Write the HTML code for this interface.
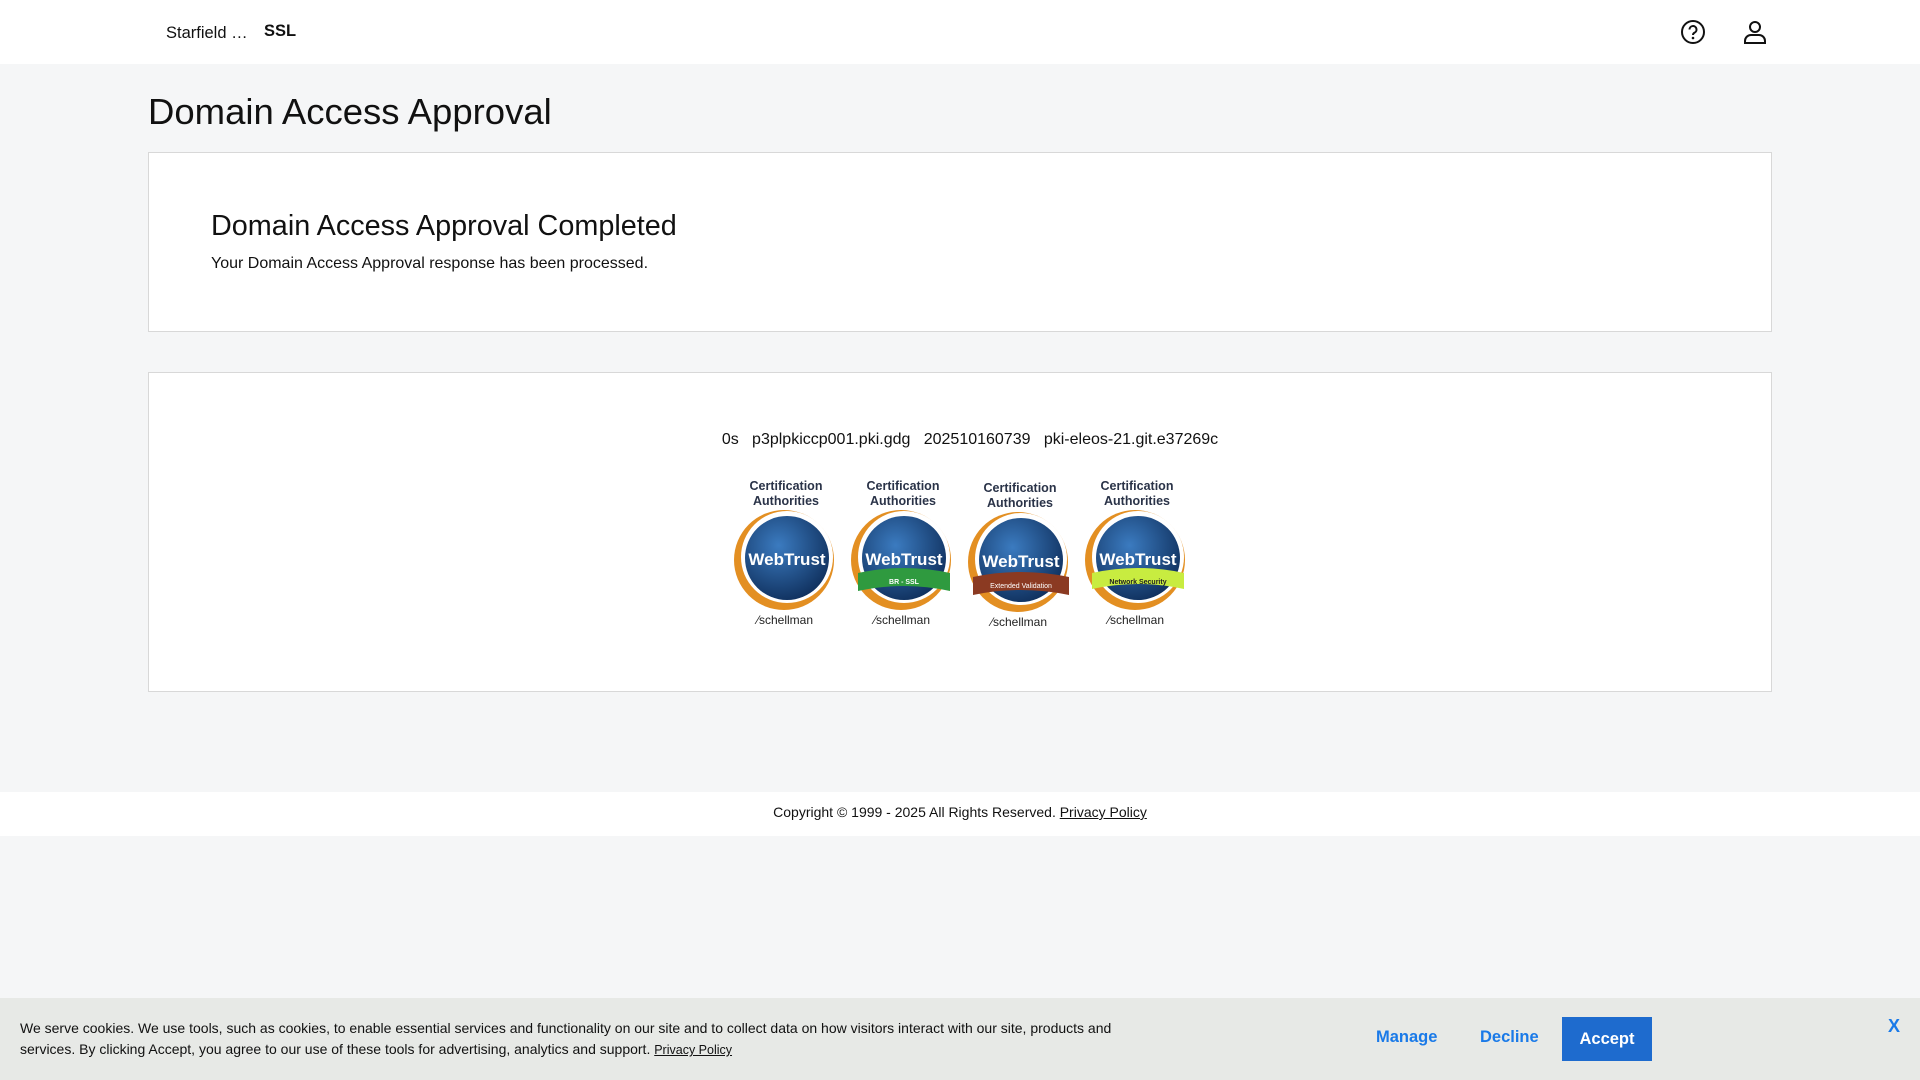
<!DOCTYPE html>
<html><head><meta charset="utf-8"><style>
*{margin:0;padding:0;box-sizing:border-box}
body{width:1920px;height:1080px;background:#f5f6f7;font-family:"Liberation Sans",Arial,sans-serif;color:#111;position:relative;overflow:hidden}
.hdr{position:absolute;left:0;top:0;width:1920px;height:64px;background:#fff}
.abs{position:absolute;white-space:nowrap}
.card{position:absolute;left:148px;width:1624px;background:#fff;border:1px solid #d8d8d8}
.foot{position:absolute;left:0;top:792px;width:1920px;height:44px;background:#fff;text-align:center;font-size:14px;line-height:40px;color:#111}
.foot a,.ck a{color:#111;text-decoration:underline}
.ck{position:absolute;left:0;top:998px;width:1920px;height:82px;background:#e7e9e6}
.lnk{position:absolute;color:#1a7ae8;font-weight:bold;font-size:17px}
</style></head><body>
<div class="hdr">
<div class="abs" style="left:166px;top:24px;font-size:16.5px">Starfield …</div>
<div class="abs" style="left:264px;top:22px;font-size:16.5px;font-weight:bold">SSL</div>
<svg class="abs" style="left:1680px;top:19px" width="26" height="26" viewBox="0 0 26 26"><circle cx="13" cy="13" r="11" fill="none" stroke="#111" stroke-width="2"/><path d="M9.5 10.5a3.5 3.5 0 1 1 5 3.2c-1 .5-1.5 1.1-1.5 2.3" fill="none" stroke="#111" stroke-width="2"/><circle cx="13" cy="19" r="1.3" fill="#111"/></svg>
<svg class="abs" style="left:1742px;top:19px" width="26" height="26" viewBox="0 0 26 26"><circle cx="13" cy="8" r="5" fill="none" stroke="#111" stroke-width="2"/><path d="M3 24v-2a6 6 0 0 1 6-6h8a6 6 0 0 1 6 6v2z" fill="none" stroke="#111" stroke-width="2"/></svg>
</div>
<div class="abs" style="left:148px;top:91px;font-size:36.5px">Domain Access Approval</div>
<div class="card" style="top:152px;height:180px">
<div class="abs" style="left:62px;top:57px;font-size:28.8px">Domain Access Approval Completed</div>
<div class="abs" style="left:62px;top:102px;font-size:16px">Your Domain Access Approval response has been processed.</div>
</div>
<div class="card" style="top:372px;height:320px">
<div class="abs" style="left:0;width:1622px;top:58px;text-align:center;font-size:16px;padding-left:20px">0s&nbsp;&nbsp;&nbsp;p3plpkiccp001.pki.gdg&nbsp;&nbsp;&nbsp;202510160739&nbsp;&nbsp;&nbsp;pki-eleos-21.git.e37269c</div>
<svg class="abs" style="left:584px;top:100px" width="460" height="170" viewBox="0 0 460 170">
<defs><radialGradient id="g" cx="40%" cy="35%" r="70%"><stop offset="0" stop-color="#3b7bc0"/><stop offset="1" stop-color="#0f2f5c"/></radialGradient>
<g id="b"><text x="53" y="17" font-size="12.5" fill="#2a3348">Certification</text><text x="53" y="32" font-size="12.5" fill="#2a3348">Authorities</text><circle cx="51" cy="87" r="50" fill="#e38f22"/><circle cx="54" cy="84" r="46" fill="#fff"/><circle cx="54" cy="85" r="42" fill="url(#g)"/><text x="54" y="92" font-size="17" fill="#fff">WebTrust</text><text x="52" y="151" font-size="12" font-weight="normal" fill="#222">⁄schellman</text></g></defs>
<g font-family="Liberation Sans,Arial,sans-serif" font-weight="bold" text-anchor="middle">
<g transform="translate(0,0)"><use href="#b"/></g>
<g transform="translate(117,0)"><use href="#b"/><path d="M8 100q46 -10 92 0v18q-46 -10 -92 0z" fill="#2f9a3f"/><text x="54" y="111" font-size="7" fill="#fff">BR - SSL</text></g>
<g transform="translate(234,2)"><use href="#b"/><path d="M6 102q48 -10 96 0v18q-48 -10 -96 0z" fill="#8b3a22"/><text x="54" y="113" font-size="7" font-weight="normal" fill="#fff">Extended Validation</text></g>
<g transform="translate(351,0)"><use href="#b"/><path d="M8 100q46 -10 92 0v16q-46 -10 -92 0z" fill="#c8ec40"/><text x="54" y="111" font-size="7" fill="#222">Network Security</text></g>
</g></svg>
</div>
<div class="foot">Copyright © 1999 - 2025 All Rights Reserved. <a>Privacy Policy</a></div>
<div class="ck">
<div class="abs" style="left:20px;top:20px;font-size:14px;line-height:21px;color:#111">We serve cookies. We use tools, such as cookies, to enable essential services and functionality on our site and to collect data on how visitors interact with our site, products and<br>services. By clicking Accept, you agree to our use of these tools for advertising, analytics and support. <a style="font-size:12.5px">Privacy Policy</a></div>
<div class="lnk" style="left:1376px;top:30px;font-size:16.5px">Manage</div>
<div class="lnk" style="left:1480px;top:30px;font-size:16.5px">Decline</div>
<div class="abs" style="left:1562px;top:19px;width:90px;height:44px;background:#1e6bce;color:#fff;font-weight:bold;font-size:16.5px;text-align:center;line-height:44px">Accept</div>
<div class="lnk" style="left:1888px;top:18px;font-size:18px">X</div>
</div>
</body></html>
